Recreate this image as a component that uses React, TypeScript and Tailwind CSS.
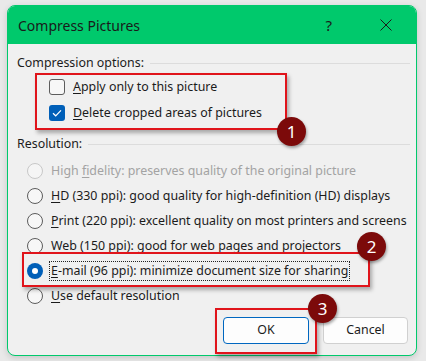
const font = { fontFamily: '"Noto Sans", "Open Sans", sans-serif' };

type RadioRowProps = {
  pre?: string;
  keyChar: string;
  rest: string;
  checked?: boolean;
  disabled?: boolean;
  focused?: boolean;
};

const Radio = ({ checked, disabled }: { checked?: boolean; disabled?: boolean }) => {
  if (checked) {
    return (
      <span className="flex h-[16px] w-[16px] shrink-0 items-center justify-center rounded-full bg-[#005fb8]">
        <span className="h-[6px] w-[6px] rounded-full bg-white" />
      </span>
    );
  }
  return (
    <span
      className={
        disabled
          ? "h-[16px] w-[16px] shrink-0 rounded-full border border-[#c8c8c8] bg-[#f5f5f5]"
          : "h-[16px] w-[16px] shrink-0 rounded-full border border-[#5c5c5c] bg-[#f7f7f7]"
      }
    />
  );
};

const RadioRow = ({ pre = "", keyChar, rest, checked, disabled, focused }: RadioRowProps) => (
  <div className="flex h-[25px] items-center gap-[6px] pl-[10px]">
    <Radio checked={checked} disabled={disabled} />
    <span
      className={
        focused
          ? "border border-dotted border-[#222] px-[1px] leading-[18px]"
          : "border border-transparent px-[1px] leading-[18px]"
      }
    >
      <span className={disabled ? "text-[#a3a3a3]" : "text-[#1b1b1b]"}>
        {pre}
        <span className="underline underline-offset-2">{keyChar}</span>
        {rest}
      </span>
    </span>
  </div>
);

const Checkbox = ({ checked }: { checked?: boolean }) =>
  checked ? (
    <span className="flex h-[16px] w-[16px] shrink-0 items-center justify-center rounded-[3px] bg-[#005fb8]">
      <svg width="10" height="8" viewBox="0 0 10 8" fill="none">
        <path d="M1 4.2 L3.7 6.8 L9 1.3" stroke="white" strokeWidth="1.2" />
      </svg>
    </span>
  ) : (
    <span className="h-[16px] w-[16px] shrink-0 rounded-[3px] border border-[#5c5c5c] bg-[#f7f7f7]" />
  );

const GroupLabel = ({ text }: { text: string }) => (
  <div className="flex h-[18px] items-center gap-[6px]">
    <span className="text-[#1b1b1b]">{text}</span>
    <div className="h-px flex-1 bg-[#dcdcdc]" />
  </div>
);

const Badge = ({ n, className }: { n: string; className: string }) => (
  <div
    className={
      "absolute flex h-[29px] w-[29px] items-center justify-center rounded-full bg-[#7c0a0a] text-[17px] text-white shadow-[1px_2px_3px_rgba(0,0,0,0.35)] " +
      className
    }
  >
    {n}
  </div>
);

const RedBox = ({ className }: { className: string }) => (
  <div
    className={
      "pointer-events-none absolute border-2 border-[#e0141b] shadow-[2px_3px_4px_rgba(0,0,0,0.3)] " + className
    }
  />
);

export default function App() {
  return (
    <div className="relative h-[361px] w-[426px] overflow-hidden bg-[#e9e9e9] pl-[7px] pt-[5px]" style={font}>
      <div className="flex h-[351px] w-[410px] flex-col overflow-hidden rounded-[8px] border border-[#00c96c] bg-[#f0f0f0] text-[12.4px] shadow-[0_2px_6px_rgba(0,0,0,0.15)]">
        <div className="flex h-[38px] shrink-0 items-center bg-[#00c96c] pl-[10px] pr-[24px] text-[#1a1a1a]">
          <span className="text-[14px]">Compress Pictures</span>
          <span className="ml-auto text-[15px]">?</span>
          <svg className="ml-[48px]" width="12" height="12" viewBox="0 0 12 12">
            <path d="M0.5 0.5 L11.5 11.5 M11.5 0.5 L0.5 11.5" stroke="#1a1a1a" strokeWidth="1" />
          </svg>
        </div>

        <div className="flex flex-1 flex-col pl-[9px] pr-[6px] pt-[10px] text-[#1b1b1b]">
          <GroupLabel text="Compression options:" />
          <div className="flex flex-col pl-[32px] pt-[2px]">
            <div className="flex h-[26px] items-center gap-[8px]">
              <Checkbox />
              <span>
                <span className="underline underline-offset-2">A</span>pply only to this picture
              </span>
            </div>
            <div className="flex h-[26px] items-center gap-[8px]">
              <Checkbox checked />
              <span>
                <span className="underline underline-offset-2">D</span>elete cropped areas of pictures
              </span>
            </div>
          </div>

          <div className="mt-[9px]">
            <GroupLabel text="Resolution:" />
          </div>
          <div className="mt-[5px] flex flex-col">
            <RadioRow pre="High " keyChar="f" rest="idelity: preserves quality of the original picture" disabled />
            <RadioRow keyChar="H" rest="D (330 ppi): good quality for high-definition (HD) displays" />
            <RadioRow keyChar="P" rest="rint (220 ppi): excellent quality on most printers and screens" />
            <RadioRow keyChar="W" rest="eb (150 ppi): good for web pages and projectors" />
            <RadioRow keyChar="E" rest="-mail (96 ppi): minimize document size for sharing" checked focused />
            <RadioRow keyChar="U" rest="se default resolution" />
          </div>

          <div className="mt-[9px] flex justify-end gap-[14px] pr-[2px]">
            <button className="h-[27px] w-[86px] rounded-[4px] border border-[#0067c0] bg-[#fdfdfd] text-[12.4px] text-[#1b1b1b]">
              OK
            </button>
            <button className="h-[27px] w-[85px] rounded-[4px] border border-[#d0d0d0] bg-[#fdfdfd] text-[12.4px] text-[#1b1b1b]">
              Cancel
            </button>
          </div>
        </div>
      </div>

      <RedBox className="left-[35px] top-[73px] h-[57px] w-[252px]" />
      <RedBox className="left-[22px] top-[252px] h-[35px] w-[348px]" />
      <RedBox className="left-[215px] top-[308px] h-[46px] w-[102px]" />
      <Badge n="1" className="left-[277px] top-[117px]" />
      <Badge n="2" className="left-[357px] top-[232px]" />
      <Badge n="3" className="left-[308px] top-[294px]" />
    </div>
  );
}
